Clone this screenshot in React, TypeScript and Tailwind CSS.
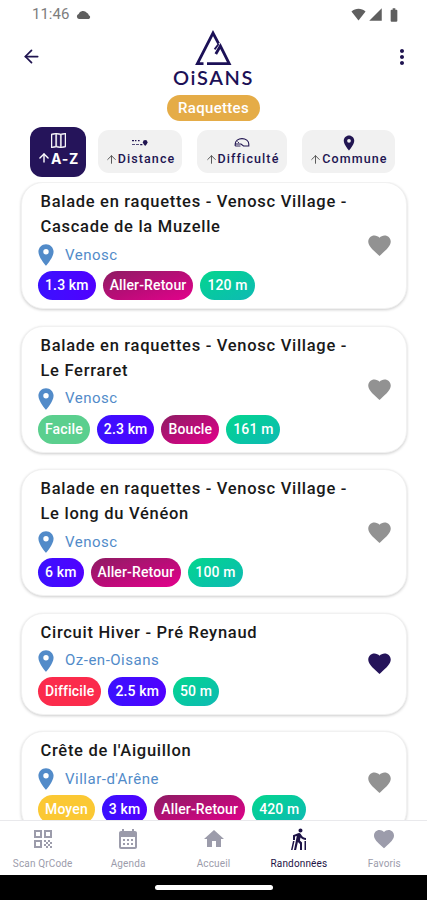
import React from 'react';
import { ArrowLeft, ArrowUp } from 'lucide-react';
import { BsMap } from 'react-icons/bs';
import {
  MdBatteryFull,
  MdCalendarMonth,
  MdFavorite,
  MdHome,
  MdLocationOn,
  MdMoreVert,
  MdNordicWalking,
  MdQrCode,
  MdSignalCellular4Bar,
} from 'react-icons/md';

type Tone = 'easy' | 'medium' | 'hard' | 'distance' | 'type' | 'climb';

interface Hike {
  title: string[];
  town: string;
  tags: { label: string; tone: Tone }[];
  liked?: boolean;
}

const tones: Record<Tone, string> = {
  easy: 'bg-[#5bcf8e]',
  medium: 'bg-[#fbc833]',
  hard: 'bg-[#fb2b4c]',
  distance: 'bg-linear-to-r from-[#3a10ff] to-[#5000ff]',
  type: 'bg-linear-to-br from-[#8e1a63] via-[#b80c77] to-[#e4008c]',
  climb: 'bg-linear-to-br from-[#06d68c] to-[#10b9b4]',
};

const hikes: Hike[] = [
  {
    title: ['Balade en raquettes - Venosc Village -', 'Cascade de la Muzelle'],
    town: 'Venosc',
    tags: [
      { label: '1.3 km', tone: 'distance' },
      { label: 'Aller-Retour', tone: 'type' },
      { label: '120 m', tone: 'climb' },
    ],
  },
  {
    title: ['Balade en raquettes - Venosc Village -', 'Le Ferraret'],
    town: 'Venosc',
    tags: [
      { label: 'Facile', tone: 'easy' },
      { label: '2.3 km', tone: 'distance' },
      { label: 'Boucle', tone: 'type' },
      { label: '161 m', tone: 'climb' },
    ],
  },
  {
    title: ['Balade en raquettes - Venosc Village -', 'Le long du Vénéon'],
    town: 'Venosc',
    tags: [
      { label: '6 km', tone: 'distance' },
      { label: 'Aller-Retour', tone: 'type' },
      { label: '100 m', tone: 'climb' },
    ],
  },
  {
    title: ['Circuit Hiver - Pré Reynaud'],
    town: 'Oz-en-Oisans',
    liked: true,
    tags: [
      { label: 'Difficile', tone: 'hard' },
      { label: '2.5 km', tone: 'distance' },
      { label: '50 m', tone: 'climb' },
    ],
  },
  {
    title: ["Crête de l'Aiguillon"],
    town: "Villar-d'Arêne",
    tags: [
      { label: 'Moyen', tone: 'medium' },
      { label: '3 km', tone: 'distance' },
      { label: 'Aller-Retour', tone: 'type' },
      { label: '420 m', tone: 'climb' },
    ],
  },
];

const StatusBar = () => (
  <div className="flex h-[29px] shrink-0 items-center justify-between pl-8 pr-[25px] text-[#5f5f5f]">
    <div className="flex items-center gap-[7px]">
      <span className="text-[15px] text-[#7d7d7d]">11:46</span>
      <svg width="15" height="9" viewBox="0 0 15 9" fill="currentColor">
        <path d="M3 9A2.6 2.6 0 0 1 2.6 4A4.6 4.2 0 0 1 10.8 2.8A3 3 0 0 1 12.8 5.2A2 2 0 0 1 12.8 9Z" />
      </svg>
    </div>
    <div className="flex items-center">
      <svg width="15" height="13" viewBox="0 0 16 13" fill="currentColor">
        <path d="M0.5 3.2C4.8-0.6 11.2-0.6 15.5 3.2L8 12.8Z" />
      </svg>
      <MdSignalCellular4Bar size={15} className="ml-[2px]" />
      <MdBatteryFull size={16} className="ml-[3px]" />
    </div>
  </div>
);

const Logo = () => (
  <div className="flex flex-col items-center text-[#1c1157]">
    <svg width="38" height="38" viewBox="0 0 38 38" fill="none" stroke="currentColor" strokeWidth="2.8">
      <path d="M8.5 34.6H2.4L18 4L23.6 14.6" />
      <path d="M12 34.6H34.2L25.4 17L20.8 25" />
      <path d="M19.6 20.4L23.6 15" strokeWidth="1.8" />
    </svg>
    <div className="font-['Lato'] text-[20px] font-semibold leading-[20px] tracking-[1.6px]">OiSANS</div>
  </div>
);

const Header = () => (
  <header className="flex h-[92px] shrink-0 items-start justify-between pl-[21px] pr-[15px]">
    <ArrowLeft size={21} strokeWidth={2} className="mt-[17px] text-[#1f1450]" />
    <div className="mr-[5px] flex flex-col items-center">
      <Logo />
      <div className="mt-[8px] flex h-[26px] w-[93px] items-center justify-center rounded-full bg-[#e5ac47] text-[15px] font-medium tracking-[0.3px] text-white">
        Raquettes
      </div>
    </div>
    <MdMoreVert size={24} className="mr-[-2px] mt-[16px] text-[#1f1450]" />
  </header>
);

const DistanceIcon = () => (
  <svg width="16" height="8" viewBox="0 0 16 8" fill="currentColor">
    <path d="M0 1h2v1.2H0zM3 1h1.4v1.2H3zM6 1h1.6v1.2H6zM0 5.2h3v.9H0zM4 5.2h3v.9H4zM8.2 5h2.2v1.2H8.2z" />
    <path d="M13.2 1a2.3 2.3 0 0 1 2.3 2.3c0 1.6-2.3 3.7-2.3 3.7s-2.3-2.1-2.3-3.7A2.3 2.3 0 0 1 13.2 1z" />
  </svg>
);

const DifficultyIcon = () => (
  <svg width="16" height="9" viewBox="0 0 16 9" fill="none" stroke="currentColor" strokeWidth="1.1">
    <path d="M1.2 8V6A6.8 5.4 0 0 1 14.8 6V8H9.5L7 6H1.5" />
    <path d="M1.2 8H6.5M3.5 3.5L5 5" strokeWidth=".9" />
  </svg>
);

const SortTab = ({ label, icon, className }: { label: string; icon: React.ReactNode; className: string }) => (
  <button className={`flex h-[43px] flex-col items-center rounded-[11px] bg-[#f1f1f1] text-[#211551] ${className}`}>
    <span className="flex h-[22px] items-center justify-center pt-[3px]">{icon}</span>
    <span className="flex items-center text-[12.5px] font-medium leading-[14px] tracking-[1.1px]">
      <ArrowUp size={13} strokeWidth={1.8} className="text-[#555]" />
      {label}
    </span>
  </button>
);

const SortBar = () => (
  <div className="flex h-[61px] shrink-0 items-center pl-[30px]">
    <button className="flex h-[50px] w-[56px] flex-col items-center rounded-[12px] bg-[#25145a] text-white">
      <BsMap size={15} strokeWidth={0.6} className="mt-[6px]" />
      <span className="mt-[2px] flex items-center font-['Inter'] text-[14px] font-bold leading-[17px] tracking-[0.8px]">
        <ArrowUp size={14} strokeWidth={2.4} />
        A-Z
      </span>
    </button>
    <SortTab label="Distance" icon={<DistanceIcon />} className="ml-[12px] w-[84px]" />
    <SortTab label="Difficulté" icon={<DifficultyIcon />} className="ml-[15px] w-[90px]" />
    <SortTab label="Commune" icon={<MdLocationOn size={18} />} className="ml-[15px] w-[93px]" />
  </div>
);

const HikeCard = ({ hike }: { hike: Hike }) => (
  <article className="flex shrink-0 items-center justify-between rounded-[22px] border border-[#f1f1f1] bg-white pb-2 pl-4 pr-[13px] pt-[6px] shadow-[0_1px_3px_rgba(0,0,0,0.2)]">
    <div>
      <h2 className="pl-[2.5px] text-[16.5px] font-medium leading-[25px] tracking-[0.71px] text-[#191919]">
        {hike.title.map((line) => (
          <span key={line} className="block whitespace-nowrap">{line}</span>
        ))}
      </h2>
      <div className="flex h-8 items-center text-[#528bc9]">
        <MdLocationOn size={26} className="ml-[-5px]" />
        <span className="ml-[6px] text-[15px] tracking-[0.5px]">{hike.town}</span>
      </div>
      <div className="flex gap-[7px]">
        {hike.tags.map((tag) => (
          <span
            key={tag.label}
            className={`flex h-[29px] items-center rounded-full px-[7px] text-[14px] font-medium tracking-[0.14px] text-white ${tones[tag.tone]}`}
          >
            {tag.label}
          </span>
        ))}
      </div>
    </div>
    <MdFavorite size={27} className={`mt-[2px] shrink-0 ${hike.liked ? 'text-[#25145a]' : 'text-[#929292]'}`} />
  </article>
);

const navItems = [
  { label: 'Scan QrCode', icon: <MdQrCode size={24} /> },
  { label: 'Agenda', icon: <MdCalendarMonth size={24} /> },
  { label: 'Accueil', icon: <MdHome size={24} /> },
  { label: 'Randonnées', icon: <MdNordicWalking size={24} />, active: true },
  { label: 'Favoris', icon: <MdFavorite size={24} /> },
];

const BottomNav = () => (
  <nav className="flex h-[55px] shrink-0 border-t border-[#e9e9ec] bg-white">
    {navItems.map((item) => (
      <button
        key={item.label}
        className={`flex flex-1 flex-col items-center pt-[6px] text-[10px] leading-[14px] tracking-[0.15px] ${item.active ? 'text-[#1d1346]' : 'text-[#9c9cab]'}`}
      >
        {item.icon}
        <span className="mt-[6px] whitespace-nowrap">{item.label}</span>
      </button>
    ))}
  </nav>
);

const App: React.FC = () => {
  return (
    <div className="flex h-[900px] w-[427px] flex-col overflow-hidden bg-white font-['Roboto',sans-serif]">
      <StatusBar />
      <Header />
      <SortBar />
      <main className="flex min-h-0 flex-1 flex-col gap-[16.5px] overflow-hidden pl-[21px] pr-[20px]">
        {hikes.map((hike) => (
          <HikeCard key={hike.title.join(' ')} hike={hike} />
        ))}
      </main>
      <BottomNav />
      <div className="flex h-[25px] shrink-0 items-center justify-center bg-black">
        <div className="h-[5px] w-[118px] rounded-full bg-white" />
      </div>
    </div>
  );
};

export default App;
